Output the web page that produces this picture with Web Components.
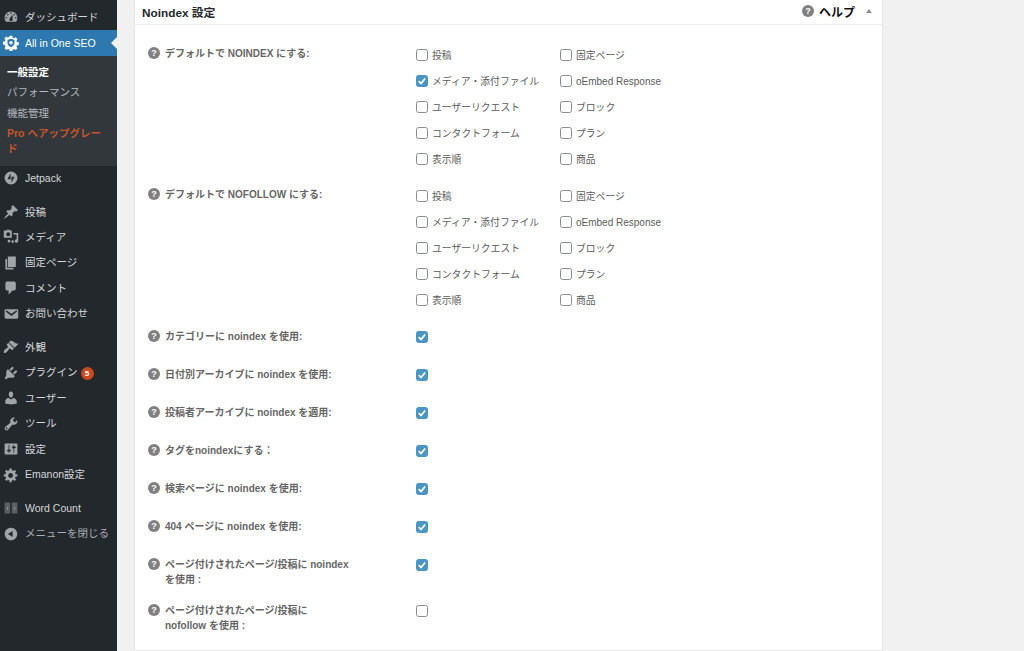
<!DOCTYPE html>
<html lang="ja">
<head>
<meta charset="utf-8">
<title>Noindex 設定</title>
<style>
html, body { margin: 0; padding: 0; height: 651px; overflow: hidden; background: #f1f1f1; }
body { display: flex; font-family: "Liberation Sans", "Noto Sans CJK JP", sans-serif; }
</style>
</head>
<body>
<admin-sidebar></admin-sidebar>
<settings-panel>
  <check-group label="デフォルトで NOINDEX にする:" checked="1"></check-group>
  <check-group label="デフォルトで NOFOLLOW にする:" class="second"></check-group>
  <single-row on>カテゴリーに noindex を使用:</single-row>
  <single-row on>日付別アーカイブに noindex を使用:</single-row>
  <single-row on>投稿者アーカイブに noindex を適用:</single-row>
  <single-row on>タグをnoindexにする：</single-row>
  <single-row on>検索ページに noindex を使用:</single-row>
  <single-row on>404 ページに noindex を使用:</single-row>
  <single-row on tall>ページ付けされたページ/投稿に noindex<br>を使用 :</single-row>
  <single-row tall>ページ付けされたページ/投稿に<br>nofollow を使用 :</single-row>
</settings-panel>
<script>
const icons = {
    dashboard: '<path fill-rule="evenodd" d="M3.76 16h12.48c1.1-1.37 1.76-3.11 1.76-5 0-4.42-3.58-8-8-8s-8 3.58-8 8c0 1.89.66 3.63 1.76 5zM10 4c.55 0 1 .45 1 1s-.45 1-1 1-1-.45-1-1 .45-1 1-1zM6 6c.55 0 1 .45 1 1s-.45 1-1 1-1-.45-1-1 .45-1 1-1zm8 0c.55 0 1 .45 1 1s-.45 1-1 1-1-.45-1-1 .45-1 1-1zm-5.37 5.55L12 7v6c0 1.1-.9 2-2 2s-2-.9-2-2c0-.57.24-1.08.63-1.45zM4 10c.55 0 1 .45 1 1s-.45 1-1 1-1-.45-1-1 .45-1 1-1zm12 0c.55 0 1 .45 1 1s-.45 1-1 1-1-.45-1-1 .45-1 1-1z"/>',
    seo: '<path fill-rule="evenodd" d="M8.3 1h3.4l.5 2.4 1.5.6 2-1.3 2.4 2.4-1.3 2 .6 1.5 2.4.5v3.4l-2.4.5-.6 1.5 1.3 2-2.4 2.4-2-1.3-1.500.6-.5 2.4H8.3l-.5-2.4-1.5-.6-2 1.3-2.4-2.4 1.3-2-.6-1.5L0 11.700V8.300l2.4-.5.6-1.5-1.3-2 2.4-2.4 2 1.3 1.5-.6zM10 4.800 5.600 6.300v3.400c0 2.600 1.900 4.700 4.400 5.500 2.500-.8 4.400-2.900 4.400-5.500V6.300z"/><circle cx="10" cy="9.600" r="2.200"/>',
    jetpack: '<path fill-rule="evenodd" d="M10 2a8 8 0 1 0 0 16 8 8 0 0 0 0-16zM9.400 4v7.600H5.600zm1.200 12V8.400h3.800z"/>',
    pin: '<path d="M10.44 3.02l1.82-1.82 6.36 6.35-1.83 1.82c-1.05-.68-2.48-.57-3.41.36l-.75.75c-.92.93-1.04 2.35-.35 3.41l-1.83 1.82-2.41-2.41-2.8 2.79c-.42.42-3.38 2.71-3.8 2.29s1.86-3.39 2.28-3.81l2.79-2.79L4.1 9.36l1.83-1.82c1.05.69 2.48.57 3.4-.36l.75-.75c.93-.92 1.05-2.35.36-3.41z"/>',
    media: '<path fill-rule="evenodd" d="M1 2h3l1-1h3l1 1h2v9H1zm5.500 2a2.500 2.500 0 1 0 0 5 2.500 2.500 0 0 0 0-5z"/><path d="M13 5h6v10a2.200 2.200 0 1 1-2-2.200V7h-4zM7.500 13.500a1.700 1.700 0 1 1 0 3.400 1.700 1.700 0 0 1 0-3.400zm4.500.5a1.700 1.700 0 1 1 0 3.400 1.700 1.700 0 0 1 0-3.400z"/>',
    page: '<path d="M6 15V2h10v13H6zm-1 1h8v2H3V5h2v11z"/>',
    comment: '<path d="M5 2h9c1.1 0 2 .9 2 2v7c0 1.1-.9 2-2 2h-2l-5 5v-5H5c-1.1 0-2-.9-2-2V4c0-1.1.9-2 2-2z"/>',
    mail: '<path d="M3.87 4h13.25C18.37 4 19 4.59 19 5.79v8.42c0 1.19-.63 1.79-1.88 1.79H3.87c-1.25 0-1.88-.6-1.88-1.79V5.79c0-1.2.63-1.79 1.88-1.79zm6.62 8.6l6.74-5.53c.24-.2.43-.66.13-1.07-.29-.41-.82-.42-1.17-.17l-5.7 3.86L4.8 5.83c-.35-.25-.88-.24-1.17.17-.3.41-.11.87.13 1.07z"/>',
    brush: '<path d="M14.48 11.06L7.41 3.99l1.5-1.5c.5-.56 2.3-.47 3.51.32 1.21.8 1.43 1.28 2.91 2.1 1.18.64 2.45 1.26 4.45.85zm-.71.71L6.7 4.7 4.93 6.47c-.39.39-.39 1.02 0 1.41l1.06 1.06c.39.39.39 1.03 0 1.42-.6.6-1.43 1.11-2.21 1.69-.35.26-.7.53-1.01.84-1.34 1.34-2.37 2.95-1.69 4.19l.13.13c1.24.68 2.85-.35 4.19-1.69.31-.31.58-.66.84-1.01.58-.78 1.09-1.61 1.69-2.21.39-.39 1.03-.39 1.42 0l1.06 1.06c.39.39 1.02.39 1.41 0z"/>',
    plugin: '<path d="M13.11 4.36L9.87 7.6 8 5.73l3.24-3.24c.35-.34 1.05-.2 1.56.32.52.51.66 1.21.31 1.55zm-8 1.77l.91-1.12 9.01 9.01-1.19.84c-.71.71-2.63 1.16-3.82 1.16H6.14L4.9 17.26c-.59.59-1.54.59-2.12 0-.59-.58-.59-1.53 0-2.12l1.24-1.24v-3.88c0-1.13.4-3.19 1.09-3.89zm7.26 3.97l3.24-3.24c.34-.35 1.04-.21 1.55.31.52.51.66 1.21.31 1.55l-3.24 3.25z"/>',
    user: '<path d="M10 9.25c-2.27 0-2.73-3.44-2.73-3.44C7 4.02 7.82 2 9.97 2c2.16 0 2.98 2.02 2.71 3.81 0 0-.41 3.44-2.68 3.44zm0 2.57L12.72 10c2.39 0 4.52 2.33 4.52 4.53v2.49s-3.65 1.13-7.24 1.13c-3.65 0-7.24-1.13-7.24-1.13v-2.49c0-2.25 1.94-4.48 4.47-4.48z"/>',
    tool: '<path fill-rule="evenodd" d="M16.68 9.77c-1.34 1.34-3.3 1.67-4.95.99l-5.41 6.52c-.99.99-2.59.99-3.58 0s-.99-2.59 0-3.57l6.52-5.42c-.68-1.65-.35-3.61.99-4.95 1.28-1.28 3.12-1.62 4.72-1.06l-2.89 2.89 2.82 2.82 2.86-2.87c.53 1.58.18 3.39-1.08 4.65zM3.81 16.21c.4.39 1.04.39 1.43 0 .4-.4.4-1.04 0-1.43-.39-.4-1.03-.4-1.43 0-.39.39-.39 1.03 0 1.43z"/>',
    sliders: '<path fill-rule="evenodd" d="M18 16V4c0-.55-.45-1-1-1H3c-.55 0-1 .45-1 1v12c0 .55.45 1 1 1h14c.55 0 1-.45 1-1zM8 11h1c.55 0 1 .45 1 1s-.45 1-1 1H8v1.5c0 .28-.22.5-.5.5s-.5-.22-.5-.5V13H6c-.55 0-1-.45-1-1s.45-1 1-1h1V5.5c0-.28.22-.5.5-.5s.5.22.5.5V11zm5-2h-1c-.55 0-1-.45-1-1s.45-1 1-1h1V5.5c0-.28.22-.5.5-.5s.5.22.5.5V7h1c.55 0 1 .45 1 1s-.45 1-1 1h-1v5.5c0 .28-.22.5-.5.5s-.5-.22-.5-.5V9z"/>',
    gear: '<path fill-rule="evenodd" d="M18 12h-2.18c-.17.7-.44 1.35-.81 1.93l1.54 1.54-2.1 2.1-1.54-1.54c-.58.36-1.23.63-1.91.79V19H8v-2.18c-.68-.16-1.33-.43-1.91-.79l-1.54 1.54-2.12-2.12 1.54-1.54c-.36-.58-.63-1.23-.79-1.91H1V9.03h2.17c.16-.7.44-1.35.8-1.94L2.43 5.55l2.1-2.1 1.54 1.54c.58-.37 1.24-.64 1.93-.81V2h3v2.18c.68.16 1.33.43 1.91.79l1.54-1.54 2.12 2.12-1.54 1.54c.36.59.64 1.24.8 1.94H18V12zm-8.500 1.500c1.660 0 3-1.340 3-3s-1.340-3-3-3-3 1.340-3 3 1.340 3 3 3z"/>',
    count: '<path d="M2 3h7v14H2zm9 0h7v14h-7z" opacity=".45"/><path d="M5 9h1.200v3H5zm9 0h1.200v3H14z" opacity=".9"/>',
    collapse: '<path fill-rule="evenodd" d="M10 2.160c4.330 0 7.840 3.510 7.840 7.840s-3.510 7.840-7.840 7.840S2.160 14.330 2.160 10 5.710 2.160 10 2.160zm2 11.720V6.12L6.180 9.970z"/>'
};

class AdminSidebar extends HTMLElement {
    constructor() {
        super();
        this.attachShadow({mode: 'open'});
    }

    connectedCallback() {
        const item = (icon, text, extra = '') => `
            <div class="item ${extra}">
                <svg viewBox="0 0 20 20" width="16" height="16">${icons[icon]}</svg>
                <span>${text}</span>
            </div>`;
        this.shadowRoot.innerHTML = `
        <style>
            :host { display: block; flex: none; width: 117px; height: 651px; background: #23282d; color: #d5d7d9; font-size: 10.5px; overflow: hidden; }
            .top { height: 4.5px; }
            .item { display: flex; align-items: center; height: 25.5px; padding-left: 3px; gap: 6px; position: relative; }
            .item svg { flex: none; fill: #a0a5aa; }
            .item span { white-space: nowrap; margin-bottom: 2px; }
            .item.latin span { margin-bottom: 0; }
            .active { background: #2d78ae; color: #fff; }
            .active svg { fill: #fff; }
            .active::after { content: ""; position: absolute; right: 0; top: 7px; border: 6px solid transparent; border-right-color: #f1f1f1; border-left-width: 0; }
            .sub { background: #32373c; height: 110px; padding: 9px 0 0 7px; box-sizing: border-box; color: #b4b9be; }
            .sub div { line-height: 15px; margin-bottom: 5.6px; }
            .sub .cur { color: #fff; font-weight: 700; }
            .sub .pro { color: #c4552c; font-weight: 700; width: 96px; }
            .gap { height: 8px; }
            .dim { color: #a9adb1; }
            .badge { display: inline-block; width: 13px; height: 13px; border-radius: 50%; background: #ca4a1f; color: #fff; font-size: 8px; line-height: 13px; text-align: center; margin-left: 3px; vertical-align: 0; }
        </style>
        <div class="top"></div>
        ${item('dashboard', 'ダッシュボード')}
        ${item('seo', 'All in One SEO', 'active latin')}
        <div class="sub">
            <div class="cur">一般設定</div>
            <div>パフォーマンス</div>
            <div>機能管理</div>
            <div class="pro">Pro へアップグレード</div>
        </div>
        ${item('jetpack', 'Jetpack', 'latin')}
        <div class="gap"></div>
        ${item('pin', '投稿', 'latin')}
        ${item('media', 'メディア')}
        ${item('page', '固定ページ')}
        ${item('comment', 'コメント')}
        ${item('mail', 'お問い合わせ')}
        <div class="gap"></div>
        ${item('brush', '外観')}
        ${item('plugin', 'プラグイン<b class="badge">5</b>')}
        ${item('user', 'ユーザー')}
        ${item('tool', 'ツール')}
        ${item('sliders', '設定')}
        ${item('gear', 'Emanon設定')}
        <div class="gap"></div>
        ${item('count', 'Word Count', 'latin')}
        ${item('collapse', 'メニューを閉じる', 'dim')}
        `;
    }
}

class HelpMark extends HTMLElement {
    constructor() {
        super();
        this.attachShadow({mode: 'open'});
        this.shadowRoot.innerHTML = `
        <style>
            :host { display: inline-block; flex: none; width: 12px; height: 12px; border-radius: 50%; background: #808080; color: #fff; font: 700 9px/12px "Liberation Sans", sans-serif; text-align: center; }
        </style>?`;
    }
}

class SettingsPanel extends HTMLElement {
    constructor() {
        super();
        this.attachShadow({mode: 'open'});
        this.shadowRoot.innerHTML = `
        <style>
            :host { display: block; flex: none; box-sizing: border-box; width: 749px; height: 651px; margin-left: 17px; background: #fff; border: 1px solid #e5e5e5; border-top: 0; }
            header { display: flex; align-items: center; box-sizing: border-box; height: 25px; padding: 0 10px 2px 7px; border-bottom: 1px solid #eee; color: #23282d; font-size: 11.8px; font-weight: 700; }
            h2 { flex: 1; margin: 0; font: inherit; }
            .help { font-size: 12px; margin-left: 5px; color: #111; }
            .arrow { width: 0; height: 0; margin-left: 11px; border: 3.5px solid transparent; border-top: 0; border-bottom: 4px solid #8a8f94; }
            .body { padding-top: 17px; }
        </style>
        <header>
            <h2>Noindex 設定</h2>
            <help-mark></help-mark><span class="help">ヘルプ</span><i class="arrow"></i>
        </header>
        <div class="body"><slot></slot></div>`;
    }
}

class CheckGroup extends HTMLElement {
    constructor() {
        super();
        this.attachShadow({mode: 'open'});
    }

    connectedCallback() {
        const names = ['投稿', '固定ページ', 'メディア・添付ファイル', 'oEmbed Response', 'ユーザーリクエスト', 'ブロック', 'コンタクトフォーム', 'プラン', '表示順', '商品'];
        const on = this.getAttribute('checked');
        this.shadowRoot.innerHTML = `
        <style>
            :host { display: grid; grid-template-columns: 268px 1fr; padding-left: 13px; margin-bottom: 11px; font-size: 9.8px; }
            :host(.second) { margin-bottom: 5px; }
            .label { display: flex; gap: 5px; align-items: center; height: 15px; margin-top: 3px; color: #666; font-weight: 700; font-size: 10px; }
            .opts { display: grid; grid-template-columns: repeat(2, 144px); grid-auto-rows: 26px; color: #5c5c5c; }
            .opt { display: flex; align-items: center; gap: 4px; white-space: nowrap; }
            .opt span { margin-bottom: 1px; }
            .opt .latin { font-size: 10px; margin-bottom: 0; }
        </style>
        <div class="label"><help-mark></help-mark><span>${this.getAttribute('label')}</span></div>
        <div class="opts">
            ${names.map((n, i) => `<div class="opt"><check-box ${on && i === 2 ? 'on' : ''}></check-box><span class="${i === 3 ? 'latin' : ''}">${n}</span></div>`).join('')}
        </div>`;
    }
}

class SingleRow extends HTMLElement {
    constructor() {
        super();
        this.attachShadow({mode: 'open'});
    }

    connectedCallback() {
        this.shadowRoot.innerHTML = `
        <style>
            :host { display: grid; grid-template-columns: 268px 1fr; padding: 11px 0 0 13px; height: 38px; box-sizing: border-box; font-size: 10px; color: #666; font-weight: 700; }
            :host([tall]) { height: 46px; }
            .label { display: flex; gap: 5px; line-height: 15px; }
            help-mark { margin-top: 1px; }
            check-box { margin-top: 2px; }
        </style>
        <div class="label"><help-mark></help-mark><span><slot></slot></span></div>
        <div><check-box ${this.hasAttribute('on') ? 'on' : ''}></check-box></div>`;
    }
}

class CheckBox extends HTMLElement {
    constructor() {
        super();
        this.attachShadow({mode: 'open'});
    }

    connectedCallback() {
        const on = this.hasAttribute('on');
        this.shadowRoot.innerHTML = `
        <style>
            :host { display: block; flex: none; box-sizing: border-box; width: 12px; height: 12px; border-radius: 2.500px; border: 1px solid ${on ? '#4a95c2' : '#8a8d90'}; background: ${on ? '#4a95c2' : '#fff'}; }
            svg { display: block; width: 10px; height: 10px; }
        </style>
        ${on ? '<svg viewBox="0 0 10 10"><path d="M1.800 5.200l2.200 2.300 4.200-5" fill="none" stroke="#fff" stroke-width="1.800"/></svg>' : ''}`;
    }
}

customElements.define('admin-sidebar', AdminSidebar);
customElements.define('help-mark', HelpMark);
customElements.define('settings-panel', SettingsPanel);
customElements.define('check-group', CheckGroup);
customElements.define('single-row', SingleRow);
customElements.define('check-box', CheckBox);
</script>
</body>
</html>
